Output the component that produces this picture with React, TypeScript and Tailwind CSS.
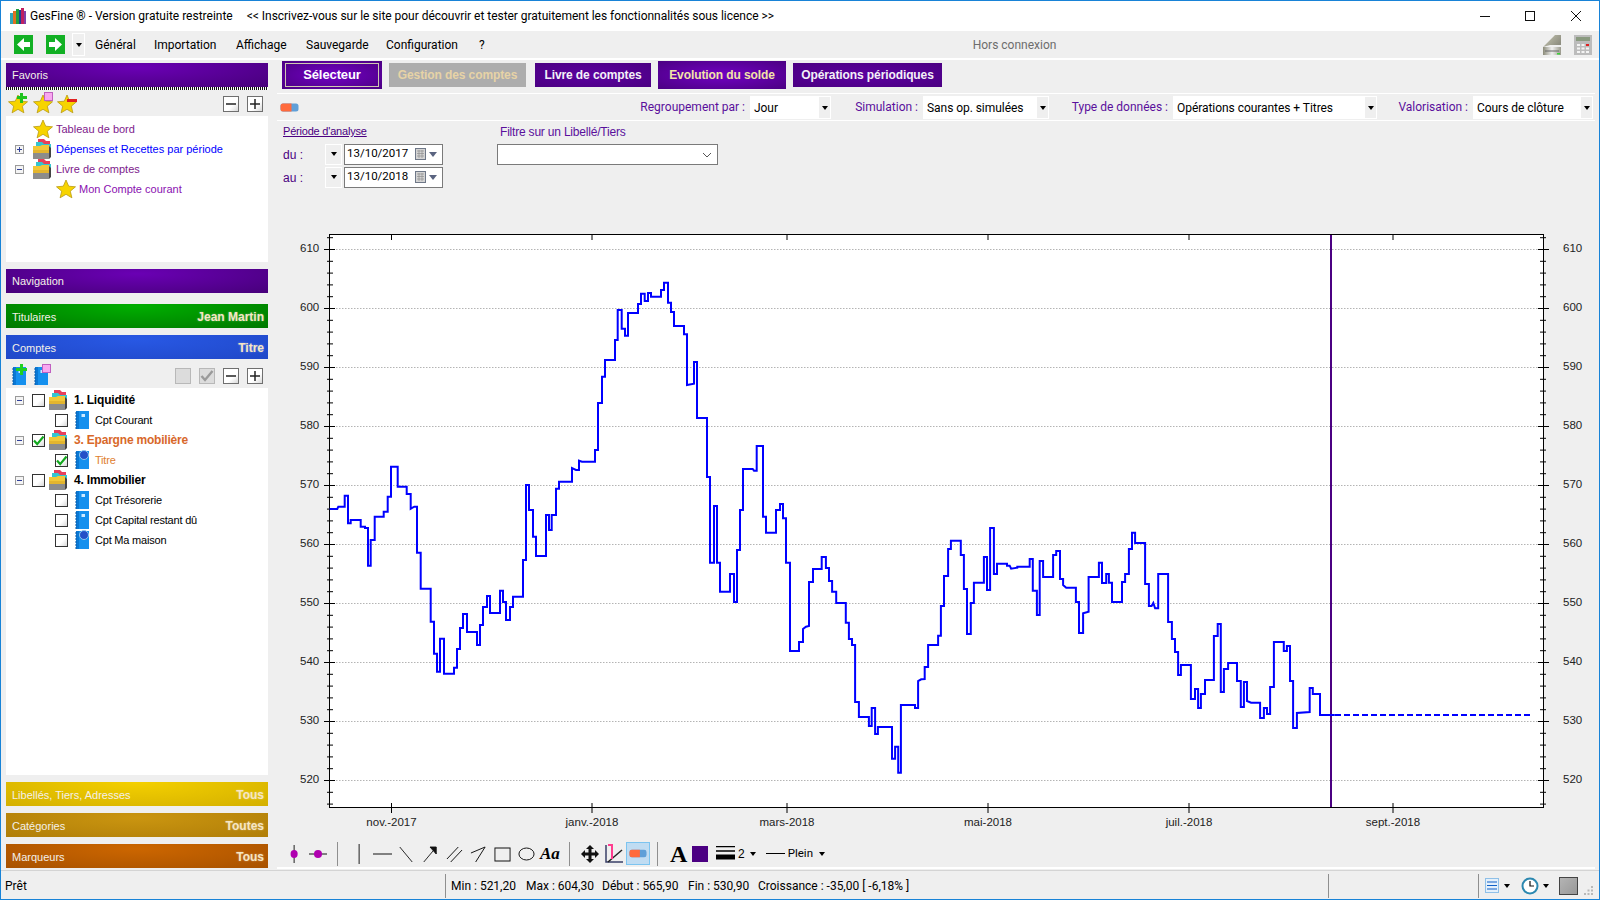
import type { ReactNode } from "react"

// Traced from the reference: left part uses 3px per screen px, right part 2.904
const curveA: [number, number][] = [
  [29,27],[52,27],[55,20],[74,20],[74,-13],[84,-13],[84,70],[92,70],[92,60],[122,60],[122,80],[135,80],[135,84],[144,84],[144,197],[152,197],[152,120],[164,120],[164,50],[191,50],[191,35],[203,35],[203,-10],[213,-10],[213,-100],[233,-100],[233,-40],[260,-40],[260,-18],[272,-18],[272,26],[283,20],[291,20],[291,158],[302,158],[302,266],[332,266],[332,365],[342,365],[342,461],[351,461],[351,515],[360,515],[360,416],[372,416],[372,521],[402,521],[402,503],[411,503],[411,447],[420,447],[420,384],[429,384],[429,342],[441,342],[441,396],[471,396],[471,435],[480,435],[480,375],[489,375],[489,321],[501,321],[501,288],[510,288],[510,339],[540,339],[540,272],[549,272],[549,306],[558,306],[558,360],[570,360],[570,321],[579,321],[579,290],[609,290],[609,180],[618,180],[618,-45],[627,-45],[627,30],[639,30],[639,110],[648,110],[648,168],[678,168],[678,45],[687,45],[687,90],[695,90],[695,45],[708,45],[708,-34],[717,-34],[717,-55],[756,-55],[756,-96],[768,-90],[777,-90],[777,-118],[786,-115],[825,-115],[825,-150],[834,-150],[834,-291],[846,-291],[846,-370],[855,-370],[855,-420],[885,-420],[885,-480],[893,-480],[893,-570],[905,-570],[905,-514],[915,-514],[915,-493],[924,-493],[924,-561],[954,-561],[954,-588],[963,-588],[963,-619],[974,-619],[974,-597],[984,-597],[984,-621],[993,-621],[993,-610],[1023,-610],[1023,-630],[1032,-630],[1032,-652],[1044,-652],[1044,-592],[1053,-592],[1053,-564],[1062,-564],[1062,-522],[1092,-522],[1092,-497],[1101,-497],[1101,-345],[1122,-349],[1122,-414],[1131,-414],[1131,-246],[1161,-246],[1161,-69],[1170,-69],[1170,188],[1182,188],[1182,18],[1191,18],[1191,188],[1200,188],[1200,275],[1230,275],[1230,222],[1242,222],[1242,306],[1251,306],[1251,150],[1260,150],[1260,30],[1269,30],[1269,-93],[1298,-93],[1302,-88],[1310,-88],[1310,-162],[1329,-162],[1329,50],[1338,50],[1338,98],[1368,98],[1368,30],[1380,30],[1380,12],[1389,12],[1389,55],[1398,55],[1398,188],[1410,188],[1410,453],[1437,453],[1437,426],[1449,426],[1449,387],[1458,380],[1467,378],[1467,246],[1479,246],[1479,207],[1500,207],
]
const curveB: [number, number][] = [
  [5,207],[5,171],[17,171],[17,204],[26,204],[26,243],[35,243],[35,275],[47,275],[47,309],[75,309],[75,368],[84,368],[84,417],[93,417],[93,435],[102,435],[102,606],[113,606],[113,651],[142,651],[142,678],[150,678],[150,624],[160,624],[160,702],[168,702],[168,681],[209,681],[209,776],[218,776],[218,740],[227,740],[227,818],[235,818],[235,615],[276,615],[276,624],[285,624],[285,543],[294,538],[304,537],[304,501],[314,501],[314,435],[343,435],[343,407],[351,407],[351,318],[360,318],[360,228],[372,228],[372,147],[380,147],[380,122],[409,122],[409,165],[418,165],[418,267],[427,267],[427,402],[438,402],[438,309],[447,309],[447,248],[476,248],[476,171],[485,171],[485,270],[494,270],[494,84],[505,84],[505,222],[514,222],[514,191],[543,191],[543,197],[551,197],[555,206],[573,203],[573,200],[609,200],[609,177],[618,177],[618,272],[630,272],[630,345],[638,345],[638,183],[648,183],[648,231],[677,231],[677,165],[686,165],[686,153],[697,153],[697,237],[706,237],[706,255],[715,263],[743,263],[743,306],[752,306],[752,399],[764,399],[764,340],[780,335],[780,231],[810,231],[810,188],[819,188],[819,249],[831,249],[831,222],[839,222],[839,248],[848,248],[848,306],[877,306],[877,246],[886,246],[886,222],[897,222],[897,147],[906,147],[906,98],[915,98],[915,129],[944,129],[944,252],[955,252],[955,318],[963,318],[968,309],[973,325],[982,325],[982,222],[1011,222],[1011,366],[1022,366],[1022,417],[1031,417],[1031,456],[1040,456],[1040,525],[1048,525],[1048,495],[1077,495],[1077,597],[1089,597],[1089,567],[1098,567],[1098,624],[1106,624],[1106,582],[1118,582],[1118,540],[1144,540],[1144,408],[1155,408],[1155,372],[1164,372],[1164,576],[1173,576],[1173,507],[1185,507],[1185,489],[1211,489],[1211,543],[1222,543],[1222,621],[1231,621],[1231,546],[1240,546],[1240,603],[1252,608],[1278,608],[1278,654],[1289,654],[1289,624],[1298,624],[1298,642],[1307,642],[1307,561],[1318,561],[1318,426],[1347,426],[1347,453],[1356,453],[1356,438],[1365,438],[1365,543],[1374,543],[1374,684],[1385,684],[1385,639],[1422,636],[1422,564],[1431,564],[1431,582],[1452,582],[1452,645],[1495,645],
]
const curvePoints = [
  ...curveA.map(([x, y]) => `${(320 + x / 3).toFixed(1)},${(500 + y / 3).toFixed(1)}`),
  ...curveB.map(([x, y]) => `${(820 + x / 2.904).toFixed(1)},${(500 + y / 3).toFixed(1)}`),
].join(" ")

const yLabels = [610, 600, 590, 580, 570, 560, 550, 540, 530, 520]
const xLabels: [string, number][] = [
  ["nov.-2017", 391.5],
  ["janv.-2018", 592],
  ["mars-2018", 787],
  ["mai-2018", 988],
  ["juil.-2018", 1189],
  ["sept.-2018", 1393],
]
const yOf = (v: number) => 249.5 + (610 - v) * 5.9

function Caret() {
  return <span className="block h-0 w-0 border-x-[3.5px] border-t-[4px] border-x-transparent border-t-black" />
}

function Star({ className = "" }: { className?: string }) {
  return (
    <svg viewBox="0 0 20 20" className={className}>
      <path d="M10 1l2.7 6.2 6.8.6-5.2 4.4 1.6 6.6L10 15.3l-5.9 3.5 1.6-6.6L.5 7.8l6.8-.6z" fill="#f7d400" stroke="#b99b10" strokeWidth="0.8" />
    </svg>
  )
}

function FolderStack() {
  return (
    <svg viewBox="0 0 19 20" className="h-5 w-[19px] shrink-0">
      <path d="M5 0h6l2 2h4v10H5z" fill="#e8405a" />
      <path d="M3 3h6l2 2h7v9H3z" fill="#35c5d0" />
      <path d="M0 7h7l2-1h7v7H0z" fill="#f2c838" />
      <path d="M0 11h16v9H0z" fill="#8c8c8c" />
      <path d="M0 11h16v3H0z" fill="#e3b52e" />
      <path d="M16 7l2 2v9l-2 2z" fill="#444" />
    </svg>
  )
}

function Notebook({ globe = false }: { globe?: boolean }) {
  return (
    <svg viewBox="0 0 16 20" className="h-5 w-4 shrink-0">
      <rect x="2" y="1" width="13" height="18" fill="#1590ee" />
      <path d="M2 1h3v18H2z" fill="#0a78d4" />
      <path d="M1 3h2M1 6h2M1 9h2M1 12h2M1 15h2M1 18h2" stroke="#0a5aa8" strokeWidth="1" />
      {globe ? (
        <circle cx="10" cy="5" r="4.5" fill="#2450c8" stroke="#8fc8f0" strokeWidth="1" />
      ) : (
        <rect x="7.5" y="4" width="3.5" height="3" fill="#cfeaff" />
      )}
    </svg>
  )
}

function Expander({ open = true }: { open?: boolean }) {
  return (
    <span className="relative block h-[9px] w-[9px] border border-[#9a9a9a] bg-[#f4f4f4]">
      <span className="absolute left-[1px] top-[3px] h-px w-[5px] bg-[#2f3f9a]" />
      {!open && <span className="absolute left-[3px] top-[1px] h-[5px] w-px bg-[#2f3f9a]" />}
    </span>
  )
}

function Check({ on = false }: { on?: boolean }) {
  return (
    <span className="relative block h-[13px] w-[13px] shrink-0 border border-[#333] bg-[linear-gradient(135deg,#ffffff_55%,#d8d8d8)]">
      {on && (
        <svg viewBox="0 0 13 13" className="absolute -left-px -top-px h-[13px] w-[13px]">
          <path d="M2 6.5l3.2 3.6L11.5 2.5" fill="none" stroke="#12a81e" strokeWidth="2.2" />
        </svg>
      )}
    </span>
  )
}

function SquareBtn({ kind, disabled = false }: { kind: "minus" | "plus" | "empty" | "check"; disabled?: boolean }) {
  return (
    <span className={`flex h-4 w-4 items-center justify-center border ${disabled ? "border-[#b8b8b8] bg-[#dcdcdc]" : "border-[#6f6f6f] bg-[linear-gradient(135deg,#ffffff_60%,#d8d8d8)]"}`}>
      <svg viewBox="0 0 14 14" className="h-[14px] w-[14px]">
        {(kind === "minus" || kind === "plus") && <path d="M2 7h10" stroke="#222" strokeWidth="1.5" />}
        {kind === "plus" && <path d="M7 2v10" stroke="#222" strokeWidth="1.5" />}
        {kind === "check" && <path d="M1.5 7l3.5 4 7.5-9" fill="none" stroke="#9a9a9a" strokeWidth="2.4" />}
      </svg>
    </span>
  )
}

function Band({ title, right, className }: { title: string; right?: string; className: string }) {
  return (
    <div className={`flex h-6 shrink-0 items-center justify-between pl-[6px] pr-[4px] text-[11px] text-[#f4f0e8] ${right ? "pt-[2px]" : ""} ${className}`}>
      <span>{title}</span>
      {right && <span className="text-[12px] font-bold text-[#f6e6c4] [text-shadow:0_0_2px_rgba(255,255,255,0.4)]">{right}</span>}
    </div>
  )
}

function Tab({ label, active = false, disabled = false, outlined = false, className = "" }: { label: string; active?: boolean; disabled?: boolean; outlined?: boolean; className?: string }) {
  const bg = disabled
    ? "h-6 bg-[#adadad] text-[#e7d3a6]"
    : active
      ? "h-7 bg-[radial-gradient(ellipse_at_center,#7200c4,#4b0082)] text-[#f3e3a8]"
      : "h-6 bg-[radial-gradient(ellipse_at_center,#5c00a0,#4b0082)] text-[#f4f0f8]"
  return (
    <div className={`flex items-center justify-center font-bold text-[12px] tracking-[-0.1px] ${bg} ${className}`}>
      {outlined ? (
        <span className="flex h-[24px] w-[94px] items-center justify-center border border-[#cfc8b0] text-[13px] text-white">{label}</span>
      ) : (
        label
      )}
    </div>
  )
}

function Combo({ value, className }: { value: string; className: string }) {
  return (
    <div className={`ml-[5px] flex h-[23px] shrink-0 items-center border border-white bg-white pl-[3px] font-['Roboto',sans-serif] text-[12px] tracking-[-0.05px] text-black ${className}`}>
      <span className="flex-1">{value}</span>
      <span className="flex h-full w-[11px] items-center justify-center bg-[#efefef]">
        <Caret />
      </span>
    </div>
  )
}

function Label({ children, className }: { children: ReactNode; className: string }) {
  return <span className={`shrink-0 pb-[2px] text-right font-['Roboto',sans-serif] text-[12px] text-[#5a0f9c] ${className}`}>{children}</span>
}

function DateRow({ label, value }: { label: string; value: string }) {
  return (
    <div className="flex h-[20px] items-center">
      <span className="w-[42px] pt-[2px] text-[12px] text-[#4b0082]">{label}</span>
      <span className="flex h-[21px] w-[17px] items-center justify-center border border-white bg-[#efefef]">
        <Caret />
      </span>
      <span className="ml-[2px] flex h-[21px] w-[99px] items-center border border-[#7a7a7a] bg-white pl-[2px] font-['Roboto',sans-serif] text-[11.5px] text-black">
        <span className="flex-1">{value}</span>
        <svg viewBox="0 0 11 12" className="h-3 w-[11px]">
          <rect x="0.5" y="0.5" width="10" height="11" fill="#d4d4d4" stroke="#6f7888" />
          <path d="M2 3h7M2 5.5h7M2 8h7M4 2v8M7 2v8" stroke="#8f8f8f" strokeWidth="0.7" />
        </svg>
        <span className="ml-[3px] mr-[5px] block h-0 w-0 border-x-[4px] border-t-[5px] border-x-transparent border-t-[#5a6480]" />
      </span>
    </div>
  )
}

function Eraser({ className }: { className: string }) {
  return (
    <svg viewBox="0 0 19 9" className={className}>
      <rect x="0.5" y="0.5" width="18" height="8" rx="2.5" fill="#5f9fd8" />
      <path d="M3 .5h8.5v8H3a2.5 2.5 0 01-2.5-2.5V3A2.5 2.5 0 013 .5z" fill="#ff6a3c" />
    </svg>
  )
}

function Sep({ className }: { className: string }) {
  return <span className={`block h-6 w-px shrink-0 bg-[#8f8f8f] ${className}`} />
}

function ToolSvg({ w, className, children }: { w: string; className: string; children: ReactNode }) {
  return (
    <svg viewBox="0 0 18 20" preserveAspectRatio="none" className={`h-5 shrink-0 ${w} ${className}`} fill="none" stroke="#111" strokeWidth="1">
      {children}
    </svg>
  )
}

function Chart() {
  const minor: number[] = []
  for (let v = 612; v >= 514; v -= 2) {
    if (v % 10 !== 0 && yOf(v) > 236 && yOf(v) < 806) minor.push(yOf(v))
  }
  return (
    <svg viewBox="277 200 1318 640" className="block h-[640px] w-[1318px] shrink-0">
      <rect x="330" y="235" width="1213" height="572" fill="#fff" />
      {yLabels.map((v) => (
        <line key={v} x1="330" x2="1543" y1={yOf(v)} y2={yOf(v)} stroke="#b4b4b4" strokeWidth="1" strokeDasharray="1.5 1.5" />
      ))}
      <rect x="329.5" y="234.5" width="1214" height="573" fill="none" stroke="#000" strokeWidth="1" />
      {minor.map((y) => (
        <g key={y} stroke="#000">
          <line x1="327" x2="333" y1={y} y2={y} />
          <line x1="1540" x2="1546" y1={y} y2={y} />
        </g>
      ))}
      {yLabels.map((v) => (
        <g key={v}>
          <line x1="324" x2="335" y1={yOf(v)} y2={yOf(v)} stroke="#000" />
          <line x1="1538" x2="1549" y1={yOf(v)} y2={yOf(v)} stroke="#000" />
          <text x="300" y={yOf(v) + 2} fontSize="11.5" fontFamily="'Liberation Sans', sans-serif" fill="#222">{v}</text>
          <text x="1563" y={yOf(v) + 2} fontSize="11.5" fontFamily="'Liberation Sans', sans-serif" fill="#222">{v}</text>
        </g>
      ))}
      {xLabels.map(([t, x]) => (
        <g key={t}>
          <line x1={x} x2={x} y1="234" y2="240" stroke="#000" />
          <line x1={x} x2={x} y1="803" y2="813" stroke="#000" />
          <text x={x} y="826" textAnchor="middle" fontSize="11.5" fontFamily="'Liberation Sans', sans-serif" fill="#222">{t}</text>
        </g>
      ))}
      <line x1="1331" x2="1331" y1="235" y2="807" stroke="#4b0082" strokeWidth="2" />
      <polyline points={curvePoints} fill="none" stroke="#0000ff" strokeWidth="2" />
      <line x1="1335" x2="1531" y1="715" y2="715" stroke="#0000ff" strokeWidth="2" strokeDasharray="6 3" />
    </svg>
  )
}

export default function App() {
  return (
    <div className="flex h-[900px] w-[1600px] flex-col overflow-hidden border border-[#1883d7] bg-[#efefef] font-['Liberation_Sans',sans-serif]">
      {/* title bar */}
      <div className="flex h-[30px] shrink-0 items-center bg-white font-['Roboto',sans-serif] text-[12px] text-black">
        <svg viewBox="0 0 18 16" className="ml-2 h-4 w-[18px] shrink-0">
          <path d="M1 5h3v11H1z" fill="#30a8b8" />
          <path d="M4 3h3v13H4z" fill="#e07020" />
          <path d="M7 1h3v15H7z" fill="#20a040" />
          <path d="M10 2h2v14h-2z" fill="#1c3f98" />
          <path d="M12 0h3v16h-3z" fill="#c02060" />
          <path d="M15 3h2v13h-2z" fill="#8040a8" />
        </svg>
        <span className="ml-[3px]">GesFine ® - Version gratuite restreinte</span>
        <span className="ml-[14px] tracking-[-0.03px]">&lt;&lt; Inscrivez-vous sur le site pour découvrir et tester gratuitement les fonctionnalités sous licence &gt;&gt;</span>
        <svg viewBox="0 0 112 12" className="ml-auto mr-[17px] h-3 w-[112px]" fill="none" stroke="#111">
          <path d="M10 6.5h10" />
          <rect x="55.5" y="1.5" width="9" height="9" />
          <path d="M101 1l10 10M111 1l-10 10" />
        </svg>
      </div>

      {/* menu bar */}
      <div className="flex h-[27px] shrink-0 items-center font-['Roboto',sans-serif] text-[12px] text-black">
        <svg viewBox="0 0 19 19" className="ml-[13px] h-[19px] w-[19px] shrink-0">
          <rect width="19" height="19" fill="#12b024" />
          <path d="M10 3L3 9.5 10 16v-4h6V7h-6z" fill="#fff" />
        </svg>
        <svg viewBox="0 0 19 19" className="ml-[13px] h-[19px] w-[19px] shrink-0">
          <rect width="19" height="19" fill="#12b024" />
          <path d="M9 3l7 6.5L9 16v-4H3V7h6z" fill="#fff" />
        </svg>
        <span className="ml-[7px] flex h-[23px] w-[13px] items-center justify-center border border-white">
          <Caret />
        </span>
        <span className="ml-[10px] w-[59px]">Général</span>
        <span className="w-[82px]">Importation</span>
        <span className="w-[70px]">Affichage</span>
        <span className="w-[80px]">Sauvegarde</span>
        <span className="w-[93px]">Configuration</span>
        <span>?</span>
        <span className="ml-[488px] text-[#6d6d6d]">Hors connexion</span>
        <svg viewBox="0 0 20 20" className="ml-auto h-5 w-5 shrink-0">
          <defs>
            <linearGradient id="scanLid" x1="0" x2="1" y1="0" y2="0.6">
              <stop offset="0" stopColor="#c8c8b4" />
              <stop offset="1" stopColor="#8e8e80" />
            </linearGradient>
            <linearGradient id="scanBase" x1="0" x2="1" y1="0" y2="0">
              <stop offset="0" stopColor="#8a8a78" />
              <stop offset="0.5" stopColor="#f0f0f0" />
              <stop offset="1" stopColor="#9a9a8c" />
            </linearGradient>
          </defs>
          <path d="M1 12L13 0h6v10H8z" fill="url(#scanLid)" />
          <path d="M1 12h18v8H1z" fill="url(#scanBase)" />
          <path d="M3 16h14" stroke="#666" />
          <rect x="15" y="18" width="3" height="1.5" fill="#3ad03a" />
        </svg>
        <svg viewBox="0 0 18 20" className="ml-[12px] mr-[7px] h-5 w-[18px] shrink-0">
          <rect width="18" height="20" fill="#bcbcbc" />
          <rect x="2" y="2" width="14" height="4" fill="#8a9a80" />
          <path d="M3 9h3v2H3zM7.5 9h3v2h-3zM3 12.5h3v2H3zM7.5 12.5h3v2h-3zM12 12.5h3v2h-3zM3 16h3v2H3zM7.5 16h3v2h-3zM12 16h3v2h-3z" fill="#f4f4f4" />
          <rect x="12" y="9" width="3" height="2" fill="#e02020" />
        </svg>
      </div>
      <div className="h-[2px] shrink-0 bg-white" />

      {/* body */}
      <div className="flex h-[810px] shrink-0">
        {/* left column */}
        <div className="ml-[5px] flex w-[262px] shrink-0 flex-col pt-[3px]">
          <Band title="Favoris" className="bg-[radial-gradient(ellipse_at_50%_20%,#6a00b4,#47007a)]" />
          <div className="h-[3px] shrink-0 bg-[repeating-linear-gradient(90deg,#111_0,#111_1px,#ffffff_1px,#ffffff_2px)]" />
          <div className="flex h-[26px] shrink-0 items-center pt-[2px]">
            <span className="relative ml-[2px] block h-5 w-5">
              <Star className="h-5 w-5" />
              <span className="absolute left-[9px] top-[2px] block h-[3px] w-[10px] bg-[#1fc31f]" />
              <span className="absolute left-[12px] top-[-1px] block h-[10px] w-[3px] bg-[#1fc31f]" />
            </span>
            <span className="relative ml-[5px] block h-5 w-5">
              <Star className="h-5 w-5" />
              <span className="absolute left-[11px] top-[-2px] block h-[9px] w-[9px] border border-[#c060c0] bg-[#f8a8f0]" />
            </span>
            <span className="relative ml-[4px] block h-5 w-5">
              <Star className="h-5 w-5" />
              <span className="absolute left-[10px] top-[5px] block h-[3px] w-[10px] bg-[#e02020]" />
            </span>
            <span className="ml-auto"><SquareBtn kind="minus" /></span>
            <span className="ml-2 mr-[5px]"><SquareBtn kind="plus" /></span>
          </div>
          <div className="flex h-[146px] shrink-0 flex-col bg-white pt-[3px] text-[11px]">
            <div className="flex h-5 items-center pl-[27px] text-[#7d1a8c]"><Star className="h-5 w-5 shrink-0" /><span className="ml-[3px]">Tableau de bord</span></div>
            <div className="flex h-5 items-center pl-[9px] text-[#0000ff]"><span className="w-[18px]"><Expander open={false} /></span><FolderStack /><span className="ml-[4px]">Dépenses et Recettes par période</span></div>
            <div className="flex h-5 items-center pl-[9px] text-[#7d1a8c]"><span className="w-[18px]"><Expander /></span><FolderStack /><span className="ml-[4px]">Livre de comptes</span></div>
            <div className="flex h-5 items-center pl-[50px] text-[#8a10b0]"><Star className="h-5 w-5 shrink-0" /><span className="ml-[3px]">Mon Compte courant</span></div>
          </div>
          <div className="mt-[7px]"><Band title="Navigation" className="bg-[radial-gradient(ellipse_at_50%_20%,#6a00b4,#47007a)]" /></div>
          <div className="mt-[11px]"><Band title="Titulaires" right="Jean Martin" className="bg-[radial-gradient(ellipse_at_50%_10%,#00ae00,#007800)]" /></div>
          <div className="mt-[7px]"><Band title="Comptes" right="Titre" className="bg-[radial-gradient(ellipse_at_50%_20%,#2858e4,#2048c8)]" /></div>
          <div className="flex h-[29px] shrink-0 items-center pt-[5px]">
            <span className="relative ml-[5px] block h-5 w-4">
              <Notebook />
              <span className="absolute left-[5px] top-[2px] block h-[3px] w-[11px] bg-[#1fd01f]" />
              <span className="absolute left-[9px] top-[-2px] block h-[11px] w-[3px] bg-[#1fd01f]" />
            </span>
            <span className="relative ml-[6px] block h-5 w-4">
              <Notebook />
              <span className="absolute left-[9px] top-[-2px] block h-[9px] w-[9px] border border-[#c060c0] bg-[#f8a8f0]" />
            </span>
            <span className="ml-auto"><SquareBtn kind="empty" disabled /></span>
            <span className="ml-2"><SquareBtn kind="check" disabled /></span>
            <span className="ml-2"><SquareBtn kind="minus" /></span>
            <span className="ml-2 mr-[5px]"><SquareBtn kind="plus" /></span>
          </div>
          <div className="flex min-h-0 flex-1 flex-col bg-white pt-[2px] text-[11px] tracking-[-0.2px] text-black">
            <div className="flex h-5 items-center pl-[9px]"><span className="w-[17px]"><Expander /></span><Check /><span className="ml-[4px]"><FolderStack /></span><span className="ml-[6px] text-[12px] font-bold">1. Liquidité</span></div>
            <div className="flex h-5 items-center pl-[49px]"><Check /><span className="ml-[6px]"><Notebook /></span><span className="ml-[5px]">Cpt Courant</span></div>
            <div className="flex h-5 items-center pl-[9px]"><span className="w-[17px]"><Expander /></span><Check on /><span className="ml-[4px]"><FolderStack /></span><span className="ml-[6px] text-[12px] font-bold text-[#d8682a]">3. Epargne mobilière</span></div>
            <div className="flex h-5 items-center pl-[49px]"><Check on /><span className="ml-[6px]"><Notebook globe /></span><span className="ml-[5px] text-[#e08030]">Titre</span></div>
            <div className="flex h-5 items-center pl-[9px]"><span className="w-[17px]"><Expander /></span><Check /><span className="ml-[4px]"><FolderStack /></span><span className="ml-[6px] text-[12px] font-bold">4. Immobilier</span></div>
            <div className="flex h-5 items-center pl-[49px]"><Check /><span className="ml-[6px]"><Notebook /></span><span className="ml-[5px]">Cpt Trésorerie</span></div>
            <div className="flex h-5 items-center pl-[49px]"><Check /><span className="ml-[6px]"><Notebook /></span><span className="ml-[5px]">Cpt Capital restant dû</span></div>
            <div className="flex h-5 items-center pl-[49px]"><Check /><span className="ml-[6px]"><Notebook globe /></span><span className="ml-[5px]">Cpt Ma maison</span></div>
          </div>
          <div className="mt-[7px]"><Band title="Libellés, Tiers, Adresses" right="Tous" className="bg-[radial-gradient(ellipse_at_50%_0%,#f4d000,#d4b000)]" /></div>
          <div className="mt-[7px]"><Band title="Catégories" right="Toutes" className="bg-[radial-gradient(ellipse_at_50%_20%,#ca9510,#b07e08)]" /></div>
          <div className="mb-[2px] mt-[7px]"><Band title="Marqueurs" right="Tous" className="bg-[radial-gradient(ellipse_at_50%_20%,#cc6600,#a85200)]" /></div>
        </div>

        {/* right column */}
        <div className="ml-[9px] flex w-[1318px] shrink-0 flex-col">
          <div className="flex h-[33px] shrink-0 items-center pb-[3px] pl-[5px]">
            <Tab label="Sélecteur" active outlined className="w-[100px]" />
            <Tab label="Gestion des comptes" disabled className="ml-[7px] w-[137px]" />
            <Tab label="Livre de comptes" className="ml-[9px] w-[116px]" />
            <Tab label="Evolution du solde" active className="ml-[7px] w-[128px]" />
            <Tab label="Opérations périodiques" className="ml-[7px] w-[149px]" />
          </div>
          <div className="h-px shrink-0 bg-white" />
          <div className="flex h-[26px] shrink-0 items-center pt-px">
            <Eraser className="ml-[3px] h-[9px] w-[19px] shrink-0" />
            <Label className="w-[446px]">Regroupement par :</Label>
            <Combo value="Jour" className="w-[81px]" />
            <Label className="w-[87px]">Simulation :</Label>
            <Combo value="Sans op. simulées" className="w-[126px]" />
            <Label className="w-[119px]">Type de données :</Label>
            <Combo value="Opérations courantes + Titres" className="w-[204px]" />
            <Label className="w-[91px]">Valorisation :</Label>
            <Combo value="Cours de clôture" className="w-[120px]" />
          </div>
          <div className="h-px shrink-0 bg-white" />
          <div className="flex h-[79px] shrink-0 pt-[3px]">
            <div className="ml-[6px] w-[214px]">
              <div className="h-[14px] text-[11px] leading-[14px] tracking-[-0.2px] text-[#4b0082] underline">Période d'analyse</div>
              <div className="mt-[6px] flex flex-col gap-[3px]">
                <DateRow label="du :" value="13/10/2017" />
                <DateRow label="au :" value="13/10/2018" />
              </div>
            </div>
            <div className="w-[221px]">
              <div className="h-[14px] pl-[3px] pt-px text-[12px] leading-[14px] tracking-[-0.2px] text-[#5a0f9c]">Filtre sur un Libellé/Tiers</div>
              <div className="mt-[6px] flex h-[21px] items-center justify-end border border-[#7a7a7a] bg-white pr-[5px]">
                <svg viewBox="0 0 10 6" className="h-[6px] w-[10px]"><path d="M1 1l4 4 4-4" fill="none" stroke="#555" /></svg>
              </div>
            </div>
          </div>

          <Chart />

          {/* drawing tools */}
          <div className="flex h-[27px] shrink-0 items-center text-[12px] text-black">
            <ToolSvg w="w-4" className="ml-[10px]"><path d="M8 1v18" /><circle cx="8" cy="10" r="4" fill="#b000b0" stroke="none" /></ToolSvg>
            <ToolSvg w="w-[18px]" className="ml-[6px]"><path d="M0 10h18" /><circle cx="9" cy="10" r="4" fill="#b000b0" stroke="none" /></ToolSvg>
            <Sep className="ml-[10px]" />
            <ToolSvg w="w-4" className="ml-[14px]"><path d="M8 0v20" /></ToolSvg>
            <ToolSvg w="w-[19px]" className="ml-[5px]"><path d="M0 10h18" /></ToolSvg>
            <ToolSvg w="w-[14px]" className="ml-[7px]"><path d="M1 3l16 15" /></ToolSvg>
            <ToolSvg w="w-[14px]" className="ml-[10px]"><path d="M1 18L15 5" /><path d="M9 3h8v7z" fill="#111" /></ToolSvg>
            <ToolSvg w="w-[17px]" className="ml-[9px]"><path d="M1 15L13 3M5 18L17 6" /></ToolSvg>
            <ToolSvg w="w-[17px]" className="ml-[7px]"><path d="M1 9l15-6-10 15M16 3" /></ToolSvg>
            <ToolSvg w="w-[17px]" className="ml-[7px]"><rect x="1" y="4" width="16" height="13" /></ToolSvg>
            <ToolSvg w="w-[17px]" className="ml-[7px]"><ellipse cx="9" cy="10" rx="8" ry="6" /></ToolSvg>
            <span className="ml-[5px] w-[19px] font-['Liberation_Serif',serif] text-[17px] font-bold italic">Aa</span>
            <Sep className="ml-[10px]" />
            <svg viewBox="0 0 18 18" className="ml-[11px] h-[18px] w-[18px] shrink-0" fill="#111">
              <path d="M9 0l4 4h-2.5v3.5H14V5l4 4-4 4v-2.5h-3.5V14H13l-4 4-4-4h2.5v-3.5H4V13L0 9l4-4v2.5h3.5V4H5z" />
            </svg>
            <svg viewBox="0 0 18 20" className="ml-[6px] h-5 w-[18px] shrink-0" fill="none">
              <path d="M1 1v17h17" stroke="#3a4068" strokeWidth="1.5" />
              <path d="M3 18L17 6" stroke="#222" strokeWidth="1.5" />
              <path d="M3 1h4v14" stroke="#ff3d8f" strokeWidth="2" />
            </svg>
            <span className="ml-[3px] flex h-[23px] w-6 shrink-0 items-center justify-center border border-[#7cc4f0] bg-[#c0dcf2]">
              <Eraser className="h-[9px] w-[18px]" />
            </span>
            <Sep className="ml-[7px]" />
            <span className="ml-[12px] w-[18px] font-['Liberation_Serif',serif] text-[24px] font-bold leading-none">A</span>
            <span className="ml-[4px] block h-4 w-4 shrink-0 bg-[#4b0082]" />
            <svg viewBox="0 0 19 16" className="ml-[8px] h-4 w-[19px] shrink-0"><path d="M0 .5h19M0 5h19" stroke="#000" strokeWidth="1.5" /><path d="M0 11h19" stroke="#000" strokeWidth="5" /></svg>
            <span className="ml-[3px]">2</span>
            <span className="ml-[5px]"><Caret /></span>
            <span className="ml-[10px] block h-px w-[19px] shrink-0 bg-black" />
            <span className="ml-[3px] font-['Roboto',sans-serif] text-[11.5px]">Plein</span>
            <span className="ml-[6px]"><Caret /></span>
          </div>
          <div className="h-[2px] shrink-0 bg-white" />
        </div>
      </div>

      {/* status bar */}
      <div className="flex min-h-0 flex-1 items-center border-t border-[#d4d4d4] pt-px font-['Roboto',sans-serif] text-[12px] text-black">
        <span className="ml-1 w-[440px]">Prêt</span>
        <Sep className="" />
        <span className="ml-[5px] w-[75px]">Min : 521,20</span>
        <span className="w-[76px]">Max : 604,30</span>
        <span className="w-[86px]">Début : 565,90</span>
        <span className="w-[70px]">Fin : 530,90</span>
        <span className="w-[570px]">Croissance : -35,00 [ -6,18% ]</span>
        <Sep className="" />
        <span className="block w-[149px]" />
        <Sep className="" />
        <svg viewBox="0 0 14 15" className="ml-[6px] h-[15px] w-[14px] shrink-0">
          <rect x="0.5" y="0.5" width="13" height="14" fill="#e4f0fb" stroke="#8fc0e8" />
          <path d="M2 4h10M2 7.5h10M2 11h10" stroke="#1060c8" strokeWidth="1.2" />
        </svg>
        <span className="ml-[5px]"><Caret /></span>
        <svg viewBox="0 0 18 18" className="ml-[11px] h-[18px] w-[18px] shrink-0">
          <circle cx="9" cy="9" r="7.5" fill="#fff" stroke="#2c88b0" strokeWidth="2" />
          <path d="M9 4v5h4" fill="none" stroke="#111" strokeWidth="1.2" />
        </svg>
        <span className="ml-[4px]"><Caret /></span>
        <span className="ml-[10px] block h-[18px] w-[19px] shrink-0 border border-[#444] bg-[linear-gradient(135deg,#b4b4b4,#989898)]" />
        <svg viewBox="0 0 10 10" className="ml-[6px] mt-[10px] h-[10px] w-[10px] shrink-0" fill="#b8b8b8">
          <rect x="7" y="0" width="2" height="2" /><rect x="3.5" y="3.5" width="2" height="2" /><rect x="7" y="3.5" width="2" height="2" /><rect x="0" y="7" width="2" height="2" /><rect x="3.5" y="7" width="2" height="2" /><rect x="7" y="7" width="2" height="2" />
        </svg>
      </div>
    </div>
  )
}
